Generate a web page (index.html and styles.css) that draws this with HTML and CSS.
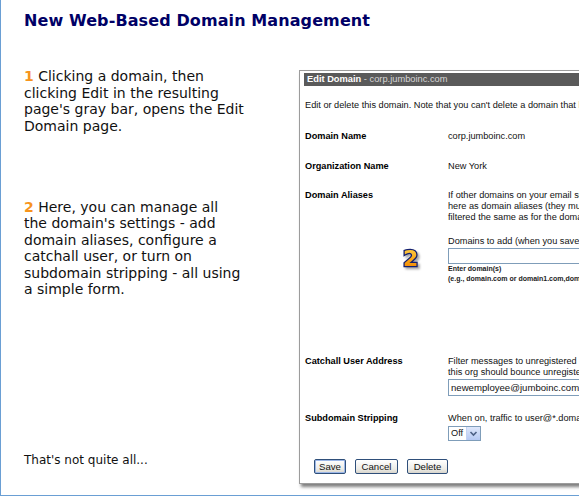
FILE: index.html
```html
<!DOCTYPE html>
<html>
<head>
<meta charset="utf-8">
<link rel="stylesheet" href="styles.css">
</head>
<body>
<div class="page">
  <h1 class="title">New Web-Based Domain Management</h1>
  <div class="main">
    <div class="left">
      <p class="step"><span class="num">1</span> Clicking a domain, then clicking Edit in the resulting page's gray bar, opens the Edit Domain page.</p>
      <p class="step step2"><span class="num">2</span> Here, you can manage all the domain's settings - add domain aliases, configure a catchall user, or turn on subdomain stripping - all using a simple form.</p>
      <p class="more">That's not quite all...</p>
    </div>
    <div class="shot">
      <div class="bar"><b>Edit Domain</b><span> - corp.jumboinc.com</span></div>
      <div class="content">
        <div class="intro">Edit or delete this domain. Note that you can't delete a domain that has users.</div>
        <div class="row r-name"><div class="label">Domain Name</div><div class="value">corp.jumboinc.com</div></div>
        <div class="row r-org"><div class="label">Organization Name</div><div class="value">New York</div></div>
        <div class="row r-alias">
          <div class="label">Domain Aliases</div>
          <div class="value">
            <div>If other domains on your email server belong to this org, add them</div>
            <div>here as domain aliases (they must be valid domains); traffic will be</div>
            <div>filtered the same as for the domain itself.</div>
            <div class="sub">Domains to add (when you save)</div>
            <div class="field wide"></div>
            <div class="hint">Enter domain(s)</div>
            <div class="hint">(e.g., domain.com or domain1.com,domain2.com)</div>
          </div>
        </div>
        <div class="row r-catch">
          <div class="label">Catchall User Address</div>
          <div class="value">
            <div>Filter messages to unregistered users to this address. Leave blank if</div>
            <div>this org should bounce unregistered users.</div>
            <div class="field wide filled">newemployee@jumboinc.com</div>
          </div>
        </div>
        <div class="row r-sub">
          <div class="label">Subdomain Stripping</div>
          <div class="value">
            <div>When on, traffic to user@*.domain.com is delivered to user@domain.com.</div>
            <div class="select"><span class="opt">Off</span><span class="arrow"><svg width="9" height="9" viewBox="0 0 9 9"><path d="M1.5 3 L4.5 6 L7.5 3" fill="none" stroke="#4d6185" stroke-width="1.6"/></svg></span></div>
          </div>
        </div>
        <div class="buttons">
          <span class="btn save">Save</span>
          <span class="btn cancel">Cancel</span>
          <span class="btn delete">Delete</span>
        </div>
      </div>
      <svg class="badge" width="26" height="28" viewBox="0 0 26 28">
        <defs>
          <linearGradient id="og" x1="0" y1="0" x2="0" y2="1">
            <stop offset="0" stop-color="#ffd54d"/>
            <stop offset="0.55" stop-color="#f9a516"/>
            <stop offset="1" stop-color="#ee7f00"/>
          </linearGradient>
        </defs>
        <text x="2" y="20" class="badge-text">2</text>
      </svg>
    </div>
  </div>
</div>
</body>
</html>
```
FILE: styles.css
```css
html, body {
  margin: 0;
  padding: 0;
  background: #fff;
}
body {
  font-family: "DejaVu Sans", Verdana, sans-serif;
}
.page {
  width: 578px;
  height: 495px;
  border-left: 1px solid #6a9fd4;
  border-bottom: 1px solid #6a9fd4;
  overflow: hidden;
}
.title {
  margin: 0;
  padding: 11px 0 0 23px;
  font-size: 16px;
  letter-spacing: 0.1px;
  line-height: 20px;
  font-weight: bold;
  color: #000066;
}
.main {
  display: grid;
  grid-template-columns: 298px 340px;
  margin-top: 37px;
}
.left {
  padding-left: 23px;
}
.step {
  margin: 0;
  width: 221px;
  font-size: 14px;
  line-height: 16.5px;
  color: #111;
}
.step2 {
  margin-top: 64.5px;
}
.num {
  color: #f7941d;
  font-weight: bold;
}
.more {
  margin: 154.5px 0 0;
  font-size: 12px;
  line-height: 16px;
  color: #111;
}
.shot {
  position: relative;
  margin-top: 2px;
  height: 410px;
  border: 1px solid #9c9c9c;
  border-right: none;
  padding: 2px 0 0 4px;
  box-shadow: 2px 3px 3px rgba(0, 0, 0, 0.5);
  font-family: "Liberation Sans", Arial, sans-serif;
  font-size: 9.2px;
  color: #111;
  white-space: nowrap;
}
.bar {
  height: 13px;
  line-height: 13px;
  background: #5a5a5a;
  color: #fff;
  padding-left: 3px;
  font-size: 9.3px;
}
.bar span {
  color: #d6d6d6;
}
.content {
  padding-left: 1px;
}
.intro {
  margin-top: 14px;
  line-height: 11px;
}
.row {
  display: flex;
  line-height: 11px;
}
.label {
  width: 143px;
  flex: none;
  font-weight: bold;
  color: #000;
}
.r-name { margin-top: 20px; }
.r-org { margin-top: 19px; }
.r-alias { margin-top: 18px; }
.r-catch { margin-top: 72px; }
.r-sub { margin-top: 17px; }
.sub {
  margin-top: 13px;
}
.field {
  box-sizing: border-box;
  height: 16px;
  border: 1px solid #7f9db9;
  background: #fff;
  margin-top: 1px;
}
.wide {
  width: 200px;
}
.filled {
  height: 17px;
  line-height: 15px;
  padding-left: 2px;
  font-size: 9.6px;
}
.hint {
  font-size: 7px;
  line-height: 10px;
  font-weight: bold;
  color: #222;
}
.select {
  display: inline-flex;
  align-items: center;
  box-sizing: border-box;
  height: 15px;
  width: 33px;
  border: 1px solid #7f9db9;
  margin-top: 2px;
  background: #fff;
}
.opt {
  flex: 1;
  padding-left: 2px;
  line-height: 13px;
}
.arrow {
  width: 13px;
  height: 13px;
  background: linear-gradient(#dfe8fb, #b6c9f3);
  border-left: 1px solid #c3d3f5;
  display: flex;
  align-items: center;
  justify-content: center;
}
.buttons {
  display: flex;
  gap: 9px;
  margin: 18px 0 0 9px;
}
.btn {
  box-sizing: border-box;
  height: 15px;
  line-height: 13px;
  padding: 0;
  text-align: center;
  border: 1px solid #2f4f7a;
  border-radius: 2px;
  background: linear-gradient(#ffffff, #ecebe6 70%, #d8d5cc);
  color: #111;
  font-size: 9.6px;
}
.save {
  width: 32px;
  box-shadow: inset 0 0 0 1px #9cb7e8;
}
.cancel {
  width: 43px;
}
.delete {
  width: 41px;
}
.badge {
  position: absolute;
  left: 101px;
  top: 175px;
  filter: drop-shadow(2px 2px 1px rgba(0, 0, 0, 0.35));
}
.badge text {
  font-family: "DejaVu Sans", sans-serif;
  font-weight: bold;
  font-size: 22px;
}
.badge-text {
  fill: url(#og);
  stroke: #14206e;
  stroke-width: 2.6px;
  paint-order: stroke fill;
}
```
